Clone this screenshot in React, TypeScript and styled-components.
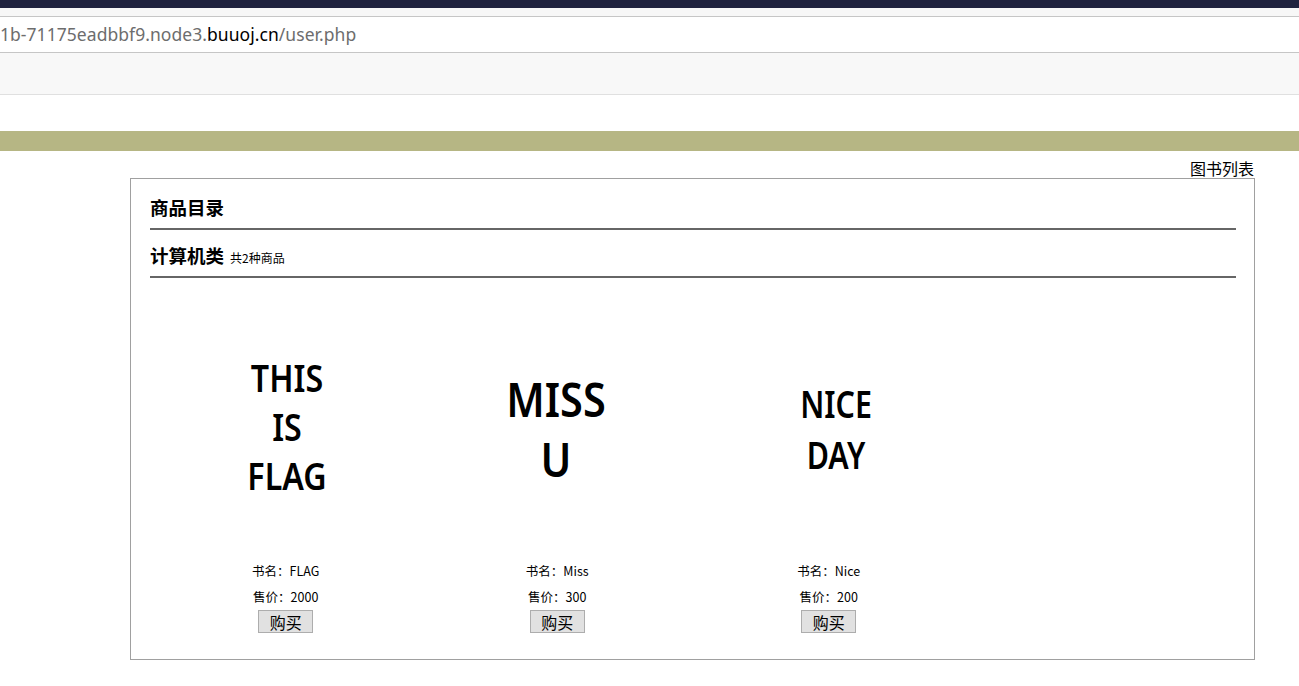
import React from "react";
import styled, { createGlobalStyle } from "styled-components";

const Global = createGlobalStyle`
  html, body { margin: 0; padding: 0; background: #fff; }
  body { font-family: "Noto Sans", "Noto Sans CJK SC", sans-serif; color: #000; overflow: hidden; }
`;

const TopBar = styled.div`
  height: 8px;
  background: #20233f;
`;

const TabStrip = styled.div`
  height: 8px;
  background: #f7f7f7;
  border-bottom: 1px solid #c6c6c6;
`;

const AddressBar = styled.div`
  height: 35px;
  background: #fff;
  border-bottom: 1px solid #c6c6c6;
  display: flex;
  align-items: center;
  overflow: hidden;
  white-space: nowrap;
`;

const Url = styled.span`
  font-family: "Noto Sans", sans-serif;
  font-size: 17.5px;
  line-height: 22px;
  margin-top: -1px;
  color: #6d6d6d;
  letter-spacing: 0.05px;
`;

const Host = styled.span`
  color: #000;
`;

const Toolbar = styled.div`
  height: 41px;
  background: #f8f8f8;
  border-bottom: 1px solid #e0e0e0;
`;

const Spacer = styled.div`
  height: 36px;
  background: #fff;
`;

const Banner = styled.div`
  height: 20px;
  background: #b6b684;
`;

const NavLine = styled.div`
  display: flex;
  justify-content: flex-end;
  padding: 7px 45px 0 0;
  height: 20px;
  font-family: "Noto Sans CJK SC", sans-serif;
  font-size: 16px;
  line-height: 20px;
`;

const Catalog = styled.div`
  box-sizing: border-box;
  margin-left: 130px;
  width: 1125px;
  border: 1px solid #a0a0a0;
  padding: 0 18px 26px 19px;
`;

const Heading = styled.div<{ $top: number }>`
  margin-top: ${(p) => p.$top}px;
  height: 24px;
  font-family: "Noto Sans CJK SC", sans-serif;
  font-size: 18.5px;
  line-height: 24px;
  font-weight: 700;
  white-space: nowrap;
`;

const Count = styled.span`
  margin-left: 6px;
  font-size: 12px;
  line-height: 12px;
  font-weight: 400;
`;

const Rule = styled.div`
  margin-top: 9px;
  height: 2px;
  background: #666;
`;

const Grid = styled.div`
  display: grid;
  grid-template-columns: repeat(4, 1fr);
  padding-top: 25px;
`;

const Product = styled.div`
  display: flex;
  flex-direction: column;
  align-items: center;
`;

const Cover = styled.div<{ $size: number; $lh: number; $sx: number; $dx: number; $dy: number }>`
  height: 250px;
  width: 250px;
  display: flex;
  flex-direction: column;
  justify-content: center;
  align-items: center;
  font-family: "Noto Sans", sans-serif;
  font-weight: 600;
  font-size: ${(p) => p.$size}px;
  line-height: ${(p) => p.$lh}px;
  transform: translate(${(p) => p.$dx}px, ${(p) => p.$dy}px) scaleX(${(p) => p.$sx});
  text-align: center;
`;

const Info = styled.div`
  margin-top: 5px;
  font-family: "Noto Sans CJK SC", sans-serif;
  font-size: 12.5px;
  line-height: 26px;
  text-align: center;
`;

const Buy = styled.button`
  box-sizing: border-box;
  width: 55px;
  height: 23px;
  padding: 0;
  background: #e1e1e1;
  border: 1px solid #adadad;
  border-radius: 0;
  font-family: "Noto Sans CJK SC", sans-serif;
  font-size: 16px;
  line-height: 20px;
  color: #000;
`;

const books = [
  { lines: ["THIS", "IS", "FLAG"], size: 37, lh: 49, sx: 0.87, dx: 1, dy: -2, name: "FLAG", price: 2000 },
  { lines: ["MISS", "U"], size: 46, lh: 60, sx: 0.9, dx: -1, dy: 1, name: "Miss", price: 300 },
  { lines: ["NICE", "DAY"], size: 38, lh: 51, sx: 0.8, dx: 7, dy: 1, name: "Nice", price: 200 },
];

export default function App() {
  return (
    <>
      <Global />
      <TopBar />
      <TabStrip />
      <AddressBar>
        <Url>
          1b-71175eadbbf9.node3.<Host>buuoj.cn</Host>/user.php
        </Url>
      </AddressBar>
      <Toolbar />
      <Spacer />
      <Banner />
      <NavLine>图书列表</NavLine>
      <Catalog>
        <Heading $top={16}>商品目录</Heading>
        <Rule />
        <Heading $top={13}>
          计算机类<Count>共2种商品</Count>
        </Heading>
        <Rule />
        <Grid>
          {books.map((b) => (
            <Product key={b.name}>
              <Cover $size={b.size} $lh={b.lh} $sx={b.sx} $dx={b.dx} $dy={b.dy}>
                {b.lines.map((l) => (
                  <span key={l}>{l}</span>
                ))}
              </Cover>
              <Info>
                <div>书名：{b.name}</div>
                <div>售价：{b.price}</div>
              </Info>
              <Buy>购买</Buy>
            </Product>
          ))}
        </Grid>
      </Catalog>
    </>
  );
}
